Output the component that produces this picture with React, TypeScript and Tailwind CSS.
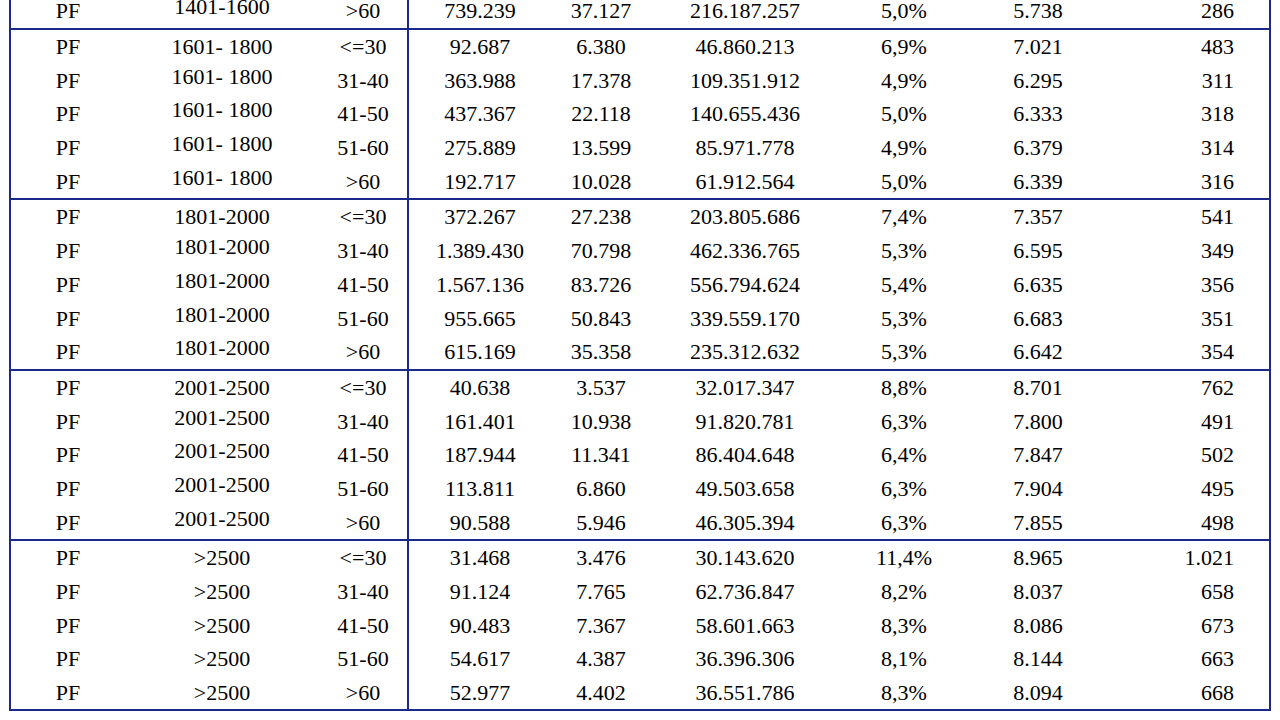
import React from 'react';

type Row = string[];

interface Group {
  range: string;
  lift: boolean; // rows after the first sit a little higher in the range column
  rows: Row[];
}

const ages = ['<=30', '31-40', '41-50', '51-60', '>60'];

const groups: Group[] = [
  {
    range: '1601- 1800',
    lift: true,
    rows: [
      ['92.687', '6.380', '46.860.213', '6,9%', '7.021', '483'],
      ['363.988', '17.378', '109.351.912', '4,9%', '6.295', '311'],
      ['437.367', '22.118', '140.655.436', '5,0%', '6.333', '318'],
      ['275.889', '13.599', '85.971.778', '4,9%', '6.379', '314'],
      ['192.717', '10.028', '61.912.564', '5,0%', '6.339', '316'],
    ],
  },
  {
    range: '1801-2000',
    lift: true,
    rows: [
      ['372.267', '27.238', '203.805.686', '7,4%', '7.357', '541'],
      ['1.389.430', '70.798', '462.336.765', '5,3%', '6.595', '349'],
      ['1.567.136', '83.726', '556.794.624', '5,4%', '6.635', '356'],
      ['955.665', '50.843', '339.559.170', '5,3%', '6.683', '351'],
      ['615.169', '35.358', '235.312.632', '5,3%', '6.642', '354'],
    ],
  },
  {
    range: '2001-2500',
    lift: true,
    rows: [
      ['40.638', '3.537', '32.017.347', '8,8%', '8.701', '762'],
      ['161.401', '10.938', '91.820.781', '6,3%', '7.800', '491'],
      ['187.944', '11.341', '86.404.648', '6,4%', '7.847', '502'],
      ['113.811', '6.860', '49.503.658', '6,3%', '7.904', '495'],
      ['90.588', '5.946', '46.305.394', '6,3%', '7.855', '498'],
    ],
  },
  {
    range: '>2500',
    lift: false,
    rows: [
      ['31.468', '3.476', '30.143.620', '11,4%', '8.965', '1.021'],
      ['91.124', '7.765', '62.736.847', '8,2%', '8.037', '658'],
      ['90.483', '7.367', '58.601.663', '8,3%', '8.086', '673'],
      ['54.617', '4.387', '36.396.306', '8,1%', '8.144', '663'],
      ['52.977', '4.402', '36.551.786', '8,3%', '8.094', '668'],
    ],
  },
];

const TableRow = ({ range, age, vals, lift }: { range: string; age: string; vals: Row; lift: boolean }) => (
  <div className="flex h-[33.7px] items-center">
    <div className="flex w-[398px] items-center self-stretch border-r-2 border-[#1b2a8a]">
      <div className="w-[114px] text-center">PF</div>
      <div className={`flex w-[194px] items-center justify-center self-stretch ${lift ? 'pb-[8px]' : ''}`}>{range}</div>
      <div className="w-[88px] text-center">{age}</div>
    </div>
    <div className="w-[142px] text-center">{vals[0]}</div>
    <div className="w-[100px] text-center">{vals[1]}</div>
    <div className="w-[188px] text-center">{vals[2]}</div>
    <div className="w-[130px] text-center">{vals[3]}</div>
    <div className="w-[138px] text-center">{vals[4]}</div>
    <div className="w-[127px] text-right">{vals[5]}</div>
  </div>
);

export default function App() {
  return (
    <div
      className="h-[720px] w-[1280px] overflow-hidden bg-white pl-[9px] text-[22px] text-black"
      style={{ fontFamily: '"Liberation Serif", "Times New Roman", serif' }}
    >
      <div className="mt-[-6px] w-[1262px] border-x-2 border-b-2 border-[#1b2a8a]">
        <TableRow range="1401-1600" age=">60" vals={['739.239', '37.127', '216.187.257', '5,0%', '5.738', '286']} lift />
        {groups.map((g) => (
          <div key={g.range} className="border-t-2 border-[#1b2a8a]">
            {g.rows.map((r, i) => (
              <TableRow key={i} range={g.range} age={ages[i]} vals={r} lift={g.lift && i > 0} />
            ))}
          </div>
        ))}
      </div>
    </div>
  );
}
